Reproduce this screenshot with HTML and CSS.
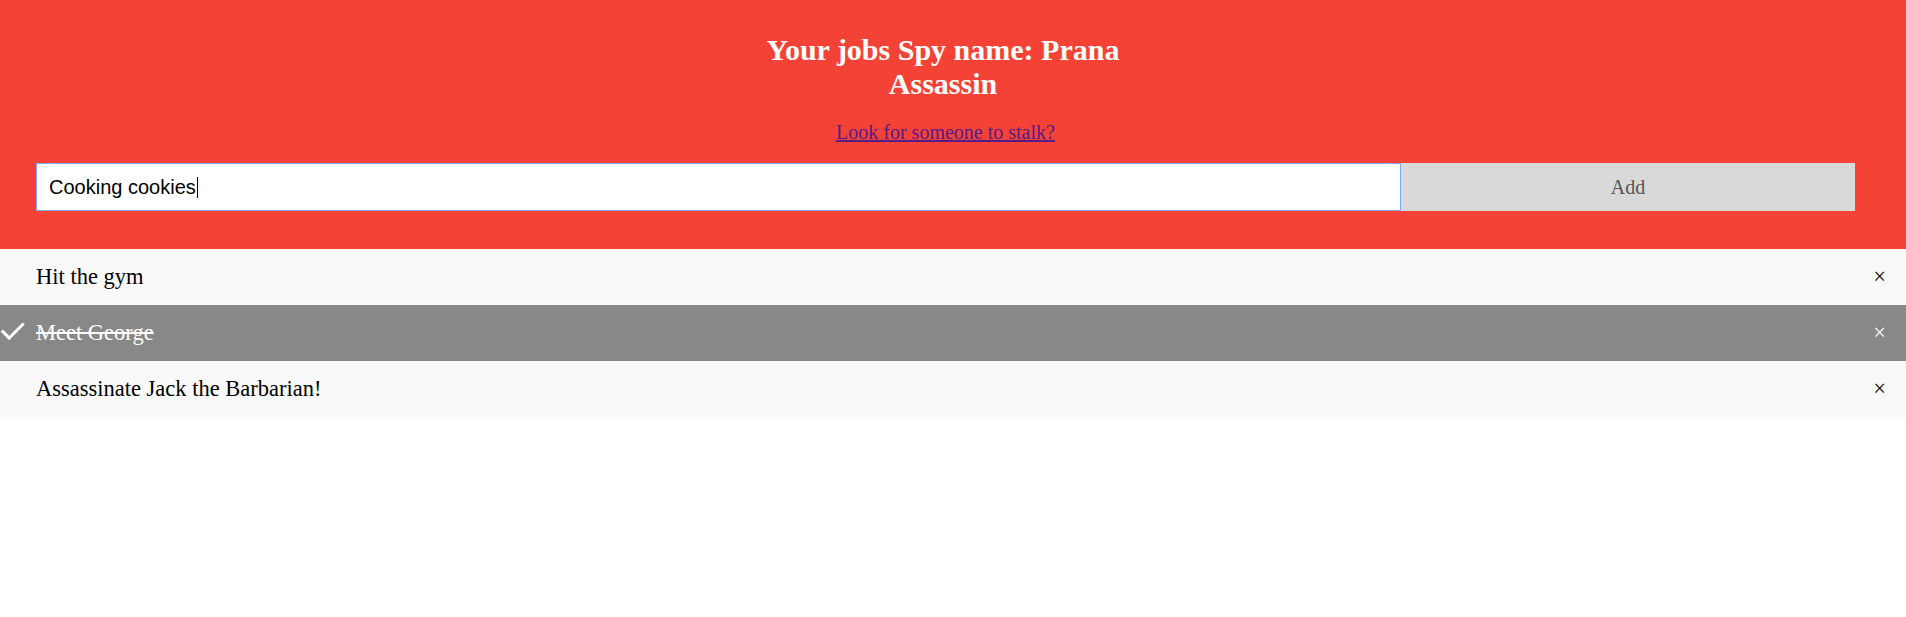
FILE: index.html
```html
<!DOCTYPE html>
<html lang="en">
<head>
<meta charset="utf-8">
<title>Your jobs</title>
<link rel="stylesheet" href="styles.css">
</head>
<body>
<div class="header">
  <h2 class="title">Your jobs Spy name: Prana<br>Assassin</h2>
  <p class="lookup"><a href="#stalk" class="lookup-link">Look for someone to stalk?</a></p>
  <div class="add-row">
    <div class="field" role="textbox"><span class="field-text">Cooking cookies</span><span class="caret"></span></div>
    <span class="add-btn">Add</span>
  </div>
</div>
<ul class="jobs">
  <li class="job">Hit the gym<span class="close">&times;</span></li>
  <li class="job checked">Meet George<span class="close">&times;</span></li>
  <li class="job">Assassinate Jack the Barbarian!<span class="close">&times;</span></li>
</ul>
</body>
</html>
```

FILE: styles.css
```css
html, body {
  margin: 0;
  padding: 0;
  background: #ffffff;
}

body {
  font-family: "Liberation Serif", "Times New Roman", serif;
  font-size: 20px;
}

.header {
  background: #f44336;
  color: #ffffff;
  padding: 33px 51px 38px 36px;
}

.title {
  margin: 0;
  padding-right: 5px;
  text-align: center;
  font-size: 30px;
  font-weight: bold;
  line-height: 34px;
}

.lookup {
  margin: 20px 0 19px 0;
  text-align: center;
  font-size: 20px;
  line-height: 23px;
}

.lookup-link {
  color: #551a8b;
  text-decoration: underline;
}

.add-row {
  display: flex;
}

.field {
  box-sizing: border-box;
  width: 1365px;
  height: 48px;
  background: #ffffff;
  border: 1px solid #82a9f6;
  padding: 0 12px;
  display: flex;
  align-items: center;
  font-family: "Liberation Sans", Arial, sans-serif;
  font-size: 20px;
  color: #000000;
}

.caret {
  display: inline-block;
  width: 1px;
  height: 21px;
  background: #000000;
  margin-left: 1px;
}

.add-btn {
  box-sizing: border-box;
  flex: 1;
  height: 48px;
  background: #d9d9d9;
  color: #555555;
  display: flex;
  align-items: center;
  justify-content: center;
  font-size: 20px;
}

.jobs {
  margin: 0;
  padding: 0;
  list-style: none;
}

.job {
  position: relative;
  padding: 15px 60px 15px 36px;
  background: #f9f9f9;
  font-size: 22.5px;
  line-height: 26px;
  color: #000000;
}

.job.checked {
  background: #888888;
  color: #ffffff;
  text-decoration: line-through;
}

.job.checked::before {
  content: "";
  position: absolute;
  top: 12px;
  left: 6.5px;
  width: 8.5px;
  height: 18.5px;
  border-style: solid;
  border-color: #ffffff;
  border-width: 0 3px 3px 0;
  transform: rotate(45deg);
}

.close {
  position: absolute;
  right: 0;
  top: 0;
  padding: 15px 20px;
  text-decoration: none;
}
```
